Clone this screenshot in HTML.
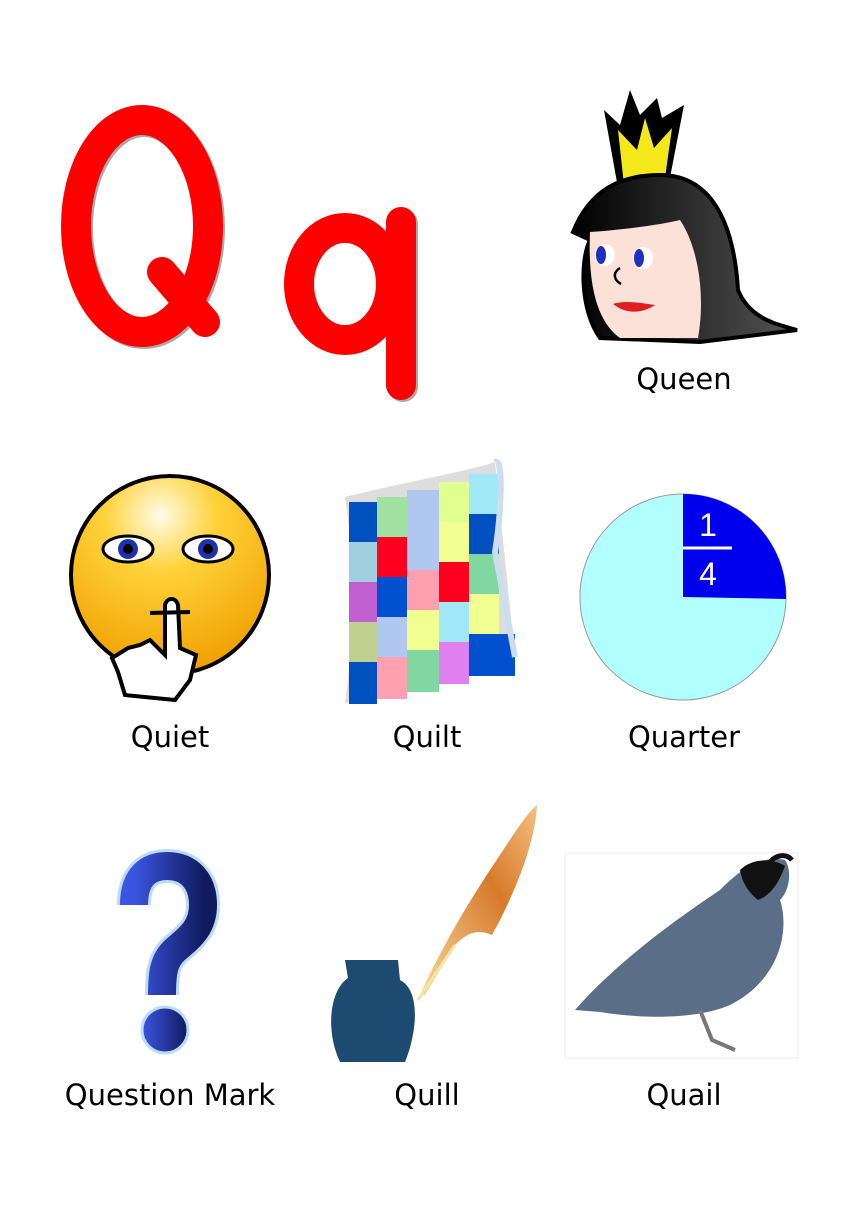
<!DOCTYPE html>
<html><head><meta charset="utf-8"><style>
html,body{margin:0;padding:0;background:#fff;}
body{width:841px;height:1220px;position:relative;overflow:hidden;font-family:"DejaVu Sans","Liberation Sans",sans-serif;}
.l{position:absolute;font-size:29px;color:#000;transform:translateX(-50%);white-space:nowrap;}
</style></head><body>
<svg width="841" height="1220" style="position:absolute;left:0;top:0">
<defs>
<radialGradient id="sm" cx="0.45" cy="0.2" r="0.8"><stop offset="0" stop-color="#fffbe8"/><stop offset="0.35" stop-color="#ffd23a"/><stop offset="1" stop-color="#f0a000"/></radialGradient>
<linearGradient id="hair" x1="0" x2="1"><stop offset="0" stop-color="#000"/><stop offset="1" stop-color="#555"/></linearGradient>
<linearGradient id="qm" x1="0" x2="1"><stop offset="0" stop-color="#3b55e0"/><stop offset="1" stop-color="#111a60"/></linearGradient>
<linearGradient id="fe" x1="0" x2="1" y1="1" y2="0"><stop offset="0" stop-color="#f7d9a0"/><stop offset="0.6" stop-color="#d77a2a"/><stop offset="1" stop-color="#f5c080"/></linearGradient>
</defs>
<!-- Q -->
<ellipse cx="142" cy="226" rx="66" ry="106" fill="none" stroke="#aaa" stroke-width="30" transform="translate(2,2)"/>
<ellipse cx="142" cy="226" rx="66" ry="106" fill="none" stroke="#f00" stroke-width="30"/>
<line x1="162" y1="272" x2="205" y2="322" stroke="#f00" stroke-width="30" stroke-linecap="round"/>
<!-- q -->
<ellipse cx="345" cy="284" rx="46" ry="56" fill="none" stroke="#f00" stroke-width="30"/>
<line x1="401" y1="222" x2="401" y2="385" stroke="#aaa" stroke-width="30" stroke-linecap="round" transform="translate(2,2)"/>
<line x1="401" y1="222" x2="401" y2="385" stroke="#f00" stroke-width="30" stroke-linecap="round"/>
<!-- Queen -->
<path d="M618,188 L604,110 L620,125 L630,90 L640,115 L657,98 L662,118 L684,105 L668,188 Z" fill="#000"/>
<path d="M624,185 L618,130 L637,150 L645,118 L654,148 L672,128 L664,185 Z" fill="#f5e81a"/>
<path d="M660,175 C720,175 735,240 738,290 C750,320 780,325 797,330 L700,342 L600,338 C580,310 580,260 590,240 L573,232 C590,190 620,175 660,175 Z" fill="url(#hair)" stroke="#000" stroke-width="4"/>
<path d="M590,232 C620,230 660,225 680,220 C700,250 705,300 698,338 L620,338 C595,320 588,280 590,232 Z" fill="#fbe1d8"/>
<ellipse cx="605" cy="255" rx="10" ry="11" fill="#fff"/><ellipse cx="601" cy="255" rx="5" ry="9" fill="#1f2fc0"/>
<ellipse cx="643" cy="258" rx="10" ry="11" fill="#fff"/><ellipse cx="639" cy="258" rx="5" ry="9" fill="#1f2fc0"/>
<path d="M620,268 C612,273 614,280 621,284" fill="none" stroke="#000" stroke-width="2.5"/>
<path d="M613,304 C625,300 640,303 655,305 C645,312 628,316 613,304 Z" fill="#e02020"/>
<!-- Quiet -->
<circle cx="170" cy="575" r="99" fill="url(#sm)" stroke="#000" stroke-width="4"/>
<ellipse cx="128" cy="549" rx="25" ry="13" fill="#fff" stroke="#000" stroke-width="3"/><circle cx="128" cy="549" r="10" fill="#2030b0"/><circle cx="128" cy="549" r="5" fill="#000"/>
<ellipse cx="208" cy="549" rx="25" ry="13" fill="#fff" stroke="#000" stroke-width="3"/><circle cx="208" cy="549" r="10" fill="#2030b0"/><circle cx="208" cy="549" r="5" fill="#000"/>
<path d="M165,605 L165,655 L150,640 L140,645 L128,648 L112,658 L118,672 L125,695 L175,700 L190,680 L196,655 L180,648 L178,605 C176,597 167,597 165,605 Z" fill="#fff" stroke="#000" stroke-width="4"/>
<line x1="150" y1="613" x2="190" y2="612" stroke="#000" stroke-width="4"/>
<!-- Quilt -->
<g transform="translate(345,462)">
<path d="M0,35 C60,20 120,10 150,0 L170,195 C120,200 60,210 0,242 C10,170 10,100 0,35 Z" fill="#ddd"/>
<g>
<rect x="4" y="40" width="28" height="40" fill="#0050c0"/><rect x="32" y="35" width="30" height="40" fill="#a0e0a0"/><rect x="62" y="28" width="32" height="40" fill="#b0c8f0"/><rect x="94" y="20" width="30" height="40" fill="#e0ff90"/><rect x="124" y="12" width="30" height="40" fill="#a0e8f8"/>
<rect x="4" y="80" width="28" height="40" fill="#a0d0e0"/><rect x="32" y="75" width="30" height="40" fill="#ff0020"/><rect x="62" y="68" width="32" height="40" fill="#b0c8f0"/><rect x="94" y="60" width="30" height="40" fill="#f0ff90"/><rect x="124" y="52" width="30" height="40" fill="#0050c0"/>
<rect x="4" y="120" width="28" height="40" fill="#c060d0"/><rect x="32" y="115" width="30" height="40" fill="#0050d0"/><rect x="62" y="108" width="32" height="40" fill="#ffa0b0"/><rect x="94" y="100" width="30" height="40" fill="#ff0020"/><rect x="124" y="92" width="30" height="40" fill="#80d8a0"/>
<rect x="4" y="160" width="28" height="40" fill="#c0d090"/><rect x="32" y="155" width="30" height="40" fill="#b0c8f0"/><rect x="62" y="148" width="32" height="40" fill="#f0ff90"/><rect x="94" y="140" width="30" height="40" fill="#a0e8f8"/><rect x="124" y="132" width="30" height="40" fill="#f0ff90"/>
<rect x="4" y="200" width="28" height="42" fill="#0050c0"/><rect x="32" y="195" width="30" height="42" fill="#ffa0b0"/><rect x="62" y="188" width="32" height="42" fill="#80d8a0"/><rect x="94" y="180" width="30" height="42" fill="#e080f0"/><rect x="124" y="172" width="46" height="42" fill="#0050d0"/>
</g>
<path d="M150,0 C160,-5 155,60 150,90 L170,195" fill="none" stroke="#cde" stroke-width="6"/>
</g>
<!-- Quarter -->
<circle cx="683" cy="597" r="103" fill="#b2ffff" stroke="#999" stroke-width="1"/>
<path d="M683,597 L683,494 A103,103 0 0 1 786,599 Z" fill="#0000ee"/>
<text x="708" y="536" font-family="Liberation Sans" font-size="32" fill="#fff" text-anchor="middle">1</text>
<line x1="683" y1="548" x2="732" y2="548" stroke="#fff" stroke-width="3"/>
<text x="708" y="585" font-family="Liberation Sans" font-size="32" fill="#fff" text-anchor="middle">4</text>
<!-- Question mark -->
<path d="M134,905 C134,875 150,866 167,866 C190,866 203,882 203,905 C203,930 186,940 175,950 C164,960 162,972 162,995" fill="none" stroke="#bde" stroke-width="34"/>
<path d="M134,905 C134,875 150,866 167,866 C190,866 203,882 203,905 C203,930 186,940 175,950 C164,960 162,972 162,995" fill="none" stroke="url(#qm)" stroke-width="28"/>
<circle cx="165" cy="1030" r="23" fill="url(#qm)" stroke="#bde" stroke-width="3"/>
<!-- Quill -->
<path d="M345,960 L398,960 L400,980 C420,990 418,1030 405,1062 L340,1062 C325,1030 330,990 348,978 Z" fill="#1c4a70"/>
<path d="M420,995 C440,950 470,900 490,870 C510,840 525,815 537,805 C535,840 520,880 500,920 L492,935 C480,930 470,930 455,945 L425,995 Z" fill="url(#fe)"/>
<line x1="418" y1="1000" x2="455" y2="945" stroke="#eee8a0" stroke-width="3"/>
<!-- Quail -->
<rect x="565" y="853" width="233" height="205" fill="#fff" stroke="#eee"/>
<path d="M575,1010 C610,970 660,930 720,890 C740,870 760,855 785,860 C792,870 790,890 780,900 C790,930 780,980 730,1005 C700,1018 650,1020 600,1012 Z" fill="#5a6e88"/>
<path d="M740,870 C752,858 772,858 785,866 C780,880 772,895 758,900 C748,892 742,882 740,870 Z" fill="#111"/>
<path d="M770,862 C776,855 786,853 792,860" fill="none" stroke="#111" stroke-width="5"/>
<path d="M700,1010 L712,1040 L735,1050" fill="none" stroke="#777" stroke-width="4"/>
</svg>
<div class="l" style="left:684px;top:362px">Queen</div>
<div class="l" style="left:170px;top:720px">Quiet</div>
<div class="l" style="left:427px;top:720px">Quilt</div>
<div class="l" style="left:684px;top:720px">Quarter</div>
<div class="l" style="left:170px;top:1078px">Question Mark</div>
<div class="l" style="left:427px;top:1078px">Quill</div>
<div class="l" style="left:684px;top:1078px">Quail</div>
</body></html>
